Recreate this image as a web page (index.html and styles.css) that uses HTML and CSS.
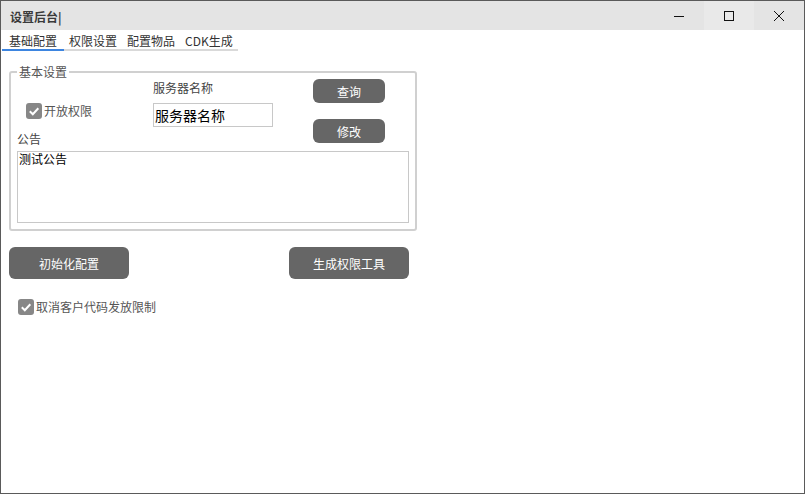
FILE: index.html
```html
<!DOCTYPE html>
<html lang="zh-CN">
<head>
  <meta charset="UTF-8">
  <title>设置后台</title>
  <link rel="stylesheet" href="styles.css">
</head>
<body>
  <div class="window">
    <div class="titlebar">
      <span class="title">设置后台|</span>
      <div class="controls">
        <span class="ctl">
          <svg width="12" height="12" viewBox="0 0 12 12"><path d="M1 6.5H11" stroke="#111" stroke-width="1"/></svg>
        </span>
        <span class="ctl ctl-max">
          <svg width="12" height="12" viewBox="0 0 12 12"><rect x="1.5" y="1.5" width="9" height="9" fill="none" stroke="#111" stroke-width="1"/></svg>
        </span>
        <span class="ctl">
          <svg width="12" height="12" viewBox="0 0 12 12"><path d="M1 1L11 11M11 1L1 11" stroke="#111" stroke-width="1"/></svg>
        </span>
      </div>
    </div>

    <div class="tabs">
      <span class="tab active">基础配置</span>
      <span class="tab">权限设置</span>
      <span class="tab">配置物品</span>
      <span class="tab">CDK生成</span>
    </div>

    <div class="page">
      <fieldset class="group">
        <legend>基本设置</legend>
        <div class="group-top">
          <label class="check check-open">
            <svg class="box" width="16" height="16" viewBox="0 0 16 16"><rect width="16" height="16" rx="3" fill="#878787"/><path d="M3.8 8.3L6.8 11.2L12.3 5.2" fill="none" stroke="#fff" stroke-width="2"/></svg>
            开放权限
          </label>
          <div class="server">
            <div class="field-label">服务器名称</div>
            <input class="server-input" type="text" value="服务器名称">
          </div>
          <div class="side-buttons">
            <button class="btn btn-small">查询</button>
            <button class="btn btn-small">修改</button>
          </div>
        </div>
        <div class="field-label">公告</div>
        <textarea class="notice">测试公告</textarea>
      </fieldset>

      <div class="actions">
        <button class="btn btn-big">初始化配置</button>
        <button class="btn btn-big">生成权限工具</button>
      </div>

      <label class="check check-limit">
        <svg class="box" width="16" height="16" viewBox="0 0 16 16"><rect width="16" height="16" rx="3" fill="#878787"/><path d="M3.8 8.3L6.8 11.2L12.3 5.2" fill="none" stroke="#fff" stroke-width="2"/></svg>
        取消客户代码发放限制
      </label>
    </div>
  </div>
</body>
</html>
```

FILE: styles.css
```css
* {
  box-sizing: border-box;
}
body {
  margin: 0;
  font-family: "Noto Sans CJK SC", "Noto Sans", sans-serif;
  font-size: 12px;
  color: #444;
  background: #fff;
}
.window {
  width: 805px;
  height: 494px;
  border: 1px solid #5a5a5a;
  background: #fff;
}
.titlebar {
  display: flex;
  justify-content: space-between;
  height: 29px;
  background: #e4e4e4;
}
.title {
  padding: 2px 0 0 9px;
  line-height: 27px;
  font-weight: bold;
  color: #3a3a3a;
}
.controls {
  display: flex;
}
.ctl {
  display: flex;
  align-items: center;
  justify-content: center;
  width: 50px;
  height: 29px;
}
.ctl-max {
  background: #e9e9e9;
}
.tabs {
  display: flex;
  margin-left: 1px;
}
.tab {
  padding: 3px 5px 0;
  line-height: 16px;
  color: #333;
  border-bottom: 2px solid #d9d9d9;
}
.tab.active {
  padding: 3px 7px 0;
  border-bottom-color: #3d85e0;
}
.page {
  padding: 15px 0 0 8px;
}
.group {
  width: 408px;
  margin: 0;
  padding: 1px 6px 6px;
  border: 2px solid #d0d0d0;
  border-radius: 3px;
}
.group legend {
  padding: 0 2px;
  line-height: 12px;
  color: #555;
}
.group-top {
  display: flex;
  height: 52px;
}
.check {
  display: flex;
  align-items: center;
  gap: 2px;
  line-height: 16px;
  color: #555;
}
.check-open {
  width: 136px;
  align-self: flex-start;
  margin-top: 24px;
  padding-left: 9px;
}
.server {
  width: 160px;
}
.field-label {
  line-height: 16px;
  color: #444;
}
.server .field-label {
  margin-top: 1px;
}
.server-input {
  display: block;
  width: 120px;
  height: 24px;
  margin-top: 7px;
  padding: 0 0 0 1px;
  border: 1px solid #c8c8c8;
  font-family: inherit;
  font-size: 14px;
  color: #000;
  outline: none;
}
.side-buttons {
  display: flex;
  flex-direction: column;
  gap: 16px;
}
.btn {
  border: none;
  background: #666;
  color: #fff;
  font-family: inherit;
  font-size: 12px;
  padding: 0;
}
.btn-small {
  flex: none;
  width: 72px;
  height: 24px;
  border-radius: 6px;
}
.notice {
  display: block;
  width: 392px;
  height: 72px;
  margin-top: 4px;
  padding: 0 1px;
  border: 1px solid #c8c8c8;
  font-family: inherit;
  font-size: 12px;
  line-height: 14px;
  color: #000;
  resize: none;
  outline: none;
}
.actions {
  display: flex;
  justify-content: space-between;
  width: 400px;
  margin-top: 16px;
}
.btn-big {
  width: 120px;
  height: 32px;
  border-radius: 6px;
}
.check-limit {
  margin: 20px 0 0 9px;
}
```
